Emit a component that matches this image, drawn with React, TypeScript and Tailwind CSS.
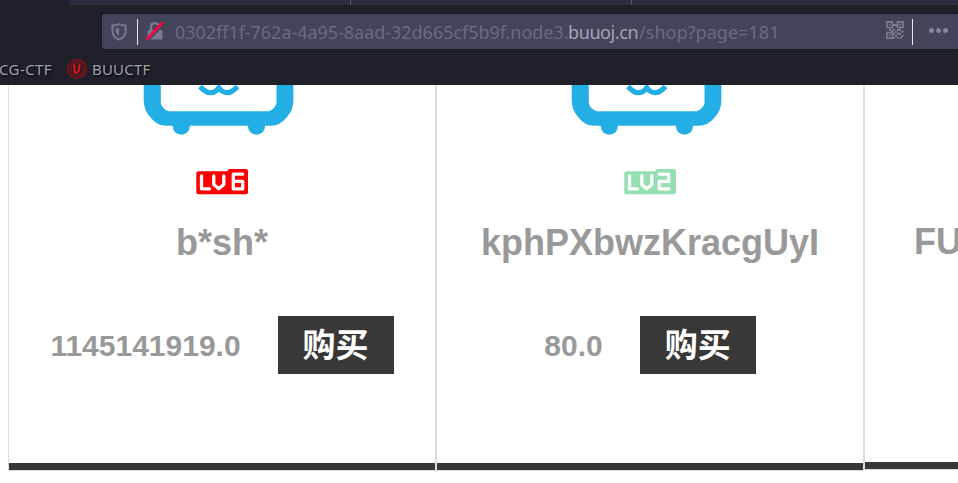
import React from "react";

type Item = { name: string; price: string; level: "6" | "2"; color: string };

const items: Item[] = [
  { name: "b*sh*", price: "1145141919.0", level: "6", color: "#ff0000" },
  { name: "kphPXbwzKracgUyI", price: "80.0", level: "2", color: "#96dfb3" },
];

const digits = {
  "6": "M242.7 174.2H233.3V188.8H242.7V181.3H233.3",
  "2": "M231.3 174.2H240.7V181.3H231.3V188.8H241",
};

function Art({ level, color }: { level: "6" | "2"; color: string }) {
  return (
    <svg className="block h-[115px] w-[426px] shrink-0" viewBox="9 85 426 115">
      <circle cx="181.3" cy="126.2" r="8.5" fill="#24aee6" />
      <circle cx="256.5" cy="126.2" r="8.5" fill="#24aee6" />
      <path
        fillRule="evenodd"
        fill="#24aee6"
        d="M143.7 70V101Q144 110 150 117Q157 125.8 166 125.8H271Q280 125.8 287 117Q293.3 110 293.4 101V70ZM160.8 70H276.5V103Q275 109 268.5 111.3H169Q162 109 160.8 103Z"
      />
      <path d="M200 86.5Q205.5 92.7 210.5 92.7Q215 92.7 218.8 87.8Q222.5 92.7 227 92.7Q232 92.7 237.5 86.5" fill="none" stroke="#24aee6" strokeWidth="5.2" />
      <path fill={color} d="M198.5 171.3H227L229 169H246Q248 169 248 171V192.3Q248 194.3 246 194.3H198.5Q196.3 194.3 196.3 192.3V173.3Q196.3 171.3 198.5 171.3Z" />
      <path d="M201.5 175.8V188.8H209.5M213.8 176V184.5L218.7 188.8L223.8 184.5V176" fill="none" stroke="#fff" strokeWidth="3.3" strokeLinecap="round" strokeLinejoin="round" />
      <path d={digits[level]} fill="none" stroke="#fff" strokeWidth="3.3" strokeLinecap="round" strokeLinejoin="round" />
    </svg>
  );
}

function Card({ item }: { item: Item }) {
  return (
    <article className="flex h-[386px] w-[428px] shrink-0 flex-col border border-t-0 border-[#ddd]">
      <Art level={item.level} color={item.color} />
      <h2 className="mt-[23px] text-center text-[36px] leading-[40px] font-bold text-[#999]">{item.name}</h2>
      <div className="mt-[53px] flex items-center justify-center gap-[37px]">
        <span className="pt-px text-[30px] leading-[57px] font-bold text-[#999]">{item.price}</span>
        <button className="h-[58px] w-[116px] bg-[#3a3836] pt-[2px] font-['Liberation_Sans','Noto_Sans_CJK_SC',sans-serif] text-[33px] leading-[56px] font-bold text-white">
          购买
        </button>
      </div>
      <div className="mt-auto h-[7px] bg-[#3a3836]" />
    </article>
  );
}

function Shield() {
  return (
    <svg className="h-[18px] w-4" viewBox="0 0 16 18">
      <path d="M8 1.2Q11 2.6 14.6 2.6V8Q14.5 14 8 16.6Q1.5 14 1.4 8V2.6Q5 2.6 8 1.2Z" fill="none" stroke="#777991" strokeWidth="2" strokeLinejoin="round" />
      <path d="M8 4.6V13Q5 11.5 4.7 8V5.6Q6.5 5.4 8 4.6Z" fill="#777991" />
    </svg>
  );
}

function Lock() {
  return (
    <svg className="h-5 w-[18px]" viewBox="0 0 18 20">
      <path d="M5 10V6Q5 2.3 9 2.3Q13 2.3 13 6V10" fill="none" stroke="#777991" strokeWidth="2.4" />
      <rect x="1.5" y="9" width="15" height="9.5" rx="1.5" fill="#777991" />
      <path d="M3 19L18 3.5" stroke="#42445a" strokeWidth="1.6" />
      <path d="M1 17.8L16.3 1.8" stroke="#ff0039" strokeWidth="2.6" strokeLinecap="round" />
    </svg>
  );
}

function QrCode() {
  return (
    <svg className="h-[18px] w-[18px]" viewBox="0 0 18 18" fill="none" stroke="#7b7f8e">
      <path strokeWidth="1.6" d="M.9.9H6.5V6.5H.9ZM11.5.9H17.1V6.5H11.5ZM.9 11.5H6.5V17.1H.9Z" />
      <path strokeWidth="1.9" d="M2.9 3.7H4.5M13.5 3.7H15.1M2.9 14.3H4.5M7 4H11M3 8.8H5M7 8.8H9M13 8.8H15M5 10H7M9 10.8H11M11 9H13M15 10.8H17.5M7 12.8H9M11 12.8H15M9 14.8H11M15.5 14.8H17.5M7 16.8H9M11 16.8H13M14 16.8H16" />
    </svg>
  );
}

function Emblem() {
  return (
    <svg className="h-5 w-5" viewBox="0 0 20 20" fill="none">
      <circle cx="10" cy="10" r="9.4" stroke="#8f1117" strokeWidth="1.1" />
      <circle cx="10" cy="10" r="7.5" stroke="#891016" strokeWidth="1.9" strokeDasharray="1.5 1" />
      <circle cx="10" cy="10" r="5.6" stroke="#8f1117" strokeWidth=".8" />
      <path d="M6 6Q8 5.4 7.5 8.5Q7 13.5 9.2 13.9Q12.6 13 12.4 5.5" stroke="#ff0b0b" strokeWidth="1.8" />
    </svg>
  );
}

export default function App() {
  return (
    <div className="h-[483px] w-[958px] overflow-hidden bg-white font-['Liberation_Sans',Arial,sans-serif]">
      <header className="flex h-[85px] flex-col bg-[#20202a]">
        <div className="flex h-[5px] pl-[69px]">
          <div className="w-[282px] border-r border-[#55566a] bg-[#2c2d40]" />
          <div className="w-[281px] border-r border-[#55566a] bg-[#2c2d40]" />
          <div className="flex-1 bg-[#2c2d40]" />
        </div>
        <div className="mt-[9px] ml-[102px] flex h-[35px] items-center rounded-l-[2px] bg-[#42445a] pl-[9px] font-['Noto_Sans',sans-serif] shadow-[0_0_0_1px_#191a25]">
          <Shield />
          <div className="ml-[10px] h-[26px] w-px bg-[#e6e6ea]" />
          <div className="mb-px ml-2"><Lock /></div>
          <div className="ml-[11px] flex text-[18px] leading-[34px] whitespace-nowrap text-[#696b82]">
            <span className="w-[393px] tracking-[-0.03px]">0302ff1f-762a-4a95-8aad-32d665cf5b9f.node3.</span>
            <span className="w-[71px] tracking-[-0.4px] text-[#a2a3b5]">buuoj.cn</span>
            <span className="tracking-[0.05px]">/shop?page=181</span>
          </div>
          <div className="mb-[3px] ml-auto"><QrCode /></div>
          <div className="ml-2 h-[26px] w-px bg-[#e6e6ea]" />
          <div className="mr-[9px] mb-[2px] ml-4 flex gap-[2px] pr-px">
            <i className="size-[5px] rounded-full bg-[#85869b]" />
            <i className="size-[5px] rounded-full bg-[#85869b]" />
            <i className="size-[5px] rounded-full bg-[#85869b]" />
          </div>
        </div>
        <nav className="mt-[10px] flex h-5 items-center font-['Noto_Sans',sans-serif] text-[15px] leading-5 text-[#a1a2b0] [text-shadow:1px_1px_2px_#000]">
          <span className="-ml-px w-[68px] pb-px tracking-[0.4px]">CG-CTF</span>
          <Emblem />
          <span className="ml-[5px] pb-px tracking-[0.2px]">BUUCTF</span>
        </nav>
      </header>
      <main className="flex items-start pl-2">
        {items.map((item) => (
          <Card key={item.name} item={item} />
        ))}
        <article className="flex h-[385px] w-[428px] shrink-0 flex-col border border-t-0 border-[#ddd]">
          <h2 className="mt-[137px] pl-[49px] text-[36px] leading-[40px] font-bold text-[#999]">FU</h2>
          <div className="mt-auto h-[7px] bg-[#3a3836]" />
        </article>
      </main>
    </div>
  );
}
